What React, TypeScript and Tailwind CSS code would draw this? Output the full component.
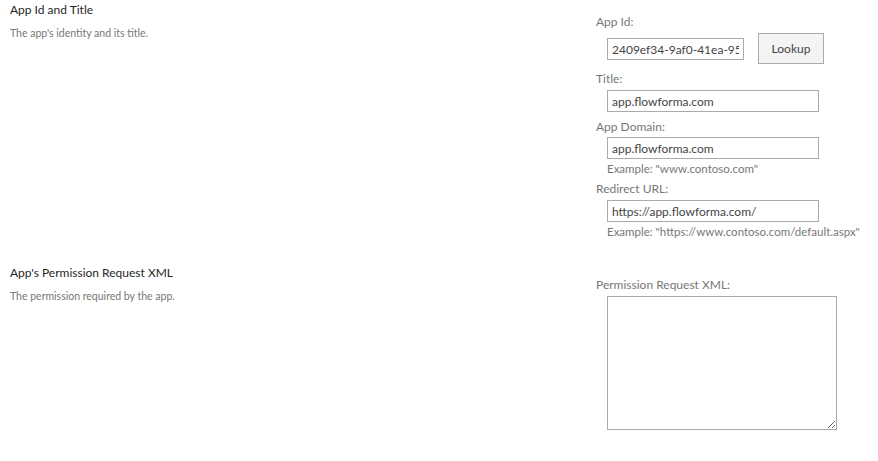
const font = { fontFamily: 'Lato, "Open Sans", "Liberation Sans", sans-serif' };

const Label = ({ text, className = '' }: { text: string; className?: string }) => (
  <div className={`text-[12px] leading-[16px] text-[#777] ${className}`}>{text}</div>
);

const TextBox = ({ value, w }: { value: string; w: string }) => (
  <input
    readOnly
    value={value}
    className={`${w} block h-[22px] border border-[#ababab] bg-white px-[4px] text-[12px] text-[#444] outline-none`}
  />
);

const Example = ({ text }: { text: string }) => (
  <div className="text-[11.5px] leading-[15px] text-[#777] pl-[11px] pt-[2px]">{text}</div>
);

const Section = ({ title, desc, children }: { title: string; desc: string; children: React.ReactNode }) => (
  <div className="flex">
    <div className="w-[596px] pl-[10px] pt-[2px]">
      <div className="text-[12px] leading-[16px] text-[#262626]">{title}</div>
      <div className="text-[10.5px] leading-[14px] text-[#777] pt-[8px]">{desc}</div>
    </div>
    <div className="flex-1">{children}</div>
  </div>
);

export default function App() {
  return (
    <div className="w-[878px] h-[461px] bg-white" style={font}>
      <Section title="App Id and Title" desc="The app's identity and its title.">
        <div className="flex flex-col pt-[14px]">
          <Label text="App Id:" />
          <div className="flex items-start gap-[14px] pl-[11px] pt-[3px]">
            <div className="pt-[5px]">
              <TextBox value="2409ef34-9af0-41ea-956c-5a1b2c3d4e5f" w="w-[137px]" />
            </div>
            <button className="w-[66px] h-[31px] border border-[#ababab] bg-[#f4f4f4] text-[12px] text-[#444]">
              Lookup
            </button>
          </div>
          <Label text="Title:" className="pt-[7px]" />
          <div className="pl-[11px] pt-[3px]">
            <TextBox value="app.flowforma.com" w="w-[212px]" />
          </div>
          <Label text="App Domain:" className="pt-[7px]" />
          <div className="pl-[11px] pt-[2px]">
            <TextBox value="app.flowforma.com" w="w-[212px]" />
          </div>
          <Example text={'Example: "www.contoso.com"'} />
          <Label text="Redirect URL:" className="pt-[5px]" />
          <div className="pl-[11px] pt-[3px]">
            <TextBox value="https://app.flowforma.com/" w="w-[212px]" />
          </div>
          <Example text={'Example: "https://www.contoso.com/default.aspx"'} />
        </div>
      </Section>
      <div className="h-[24px]" />
      <Section title="App's Permission Request XML" desc="The permission required by the app.">
        <div className="pt-[14px]">
          <Label text="Permission Request XML:" />
          <div className="pl-[11px] pt-[3px]">
            <textarea className="block w-[230px] h-[134px] border border-[#ababab] bg-white outline-none" />
          </div>
        </div>
      </Section>
    </div>
  );
}
